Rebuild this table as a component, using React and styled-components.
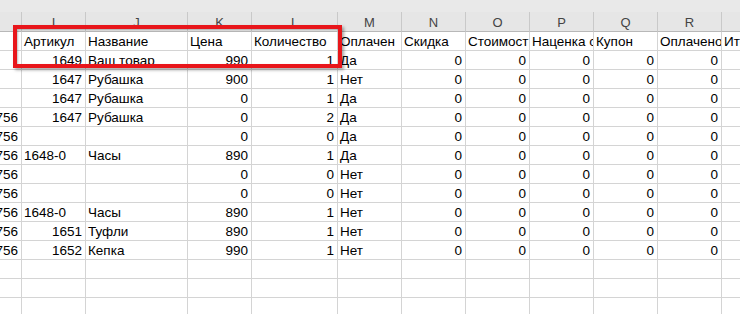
import React from 'react';
import styled, { createGlobalStyle } from 'styled-components';

const columns = [
  { letter: 'H', width: 64 },
  { letter: 'I', width: 64 },
  { letter: 'J', width: 102 },
  { letter: 'K', width: 64 },
  { letter: 'L', width: 86 },
  { letter: 'M', width: 64 },
  { letter: 'N', width: 64 },
  { letter: 'O', width: 64 },
  { letter: 'P', width: 64 },
  { letter: 'Q', width: 64 },
  { letter: 'R', width: 64 },
  { letter: 'S', width: 64 },
];

// the sheet is scrolled so that only the right edge of column H shows
const scrollLeft = 42;

const header = ['', 'Артикул', 'Название', 'Цена', 'Количество', 'Оплачен', 'Скидка', 'Стоимост', 'Наценка с', 'Купон', 'Оплачено', 'Итого'];

const zeros = [0, 0, 0, 0, 0];

const data = [
  ['', 1649, 'Ваш товар', 990, 1, 'Да', ...zeros],
  ['', 1647, 'Рубашка', 900, 1, 'Нет', ...zeros],
  ['', 1647, 'Рубашка', 0, 1, 'Да', ...zeros],
  [756, 1647, 'Рубашка', 0, 2, 'Да', ...zeros],
  [756, '', '', 0, 0, 'Да', ...zeros],
  [756, '1648-0', 'Часы', 890, 1, 'Да', ...zeros],
  [756, '', '', 0, 0, 'Нет', ...zeros],
  [756, '', '', 0, 0, 'Нет', ...zeros],
  [756, '1648-0', 'Часы', 890, 1, 'Нет', ...zeros],
  [756, 1651, 'Туфли', 890, 1, 'Нет', ...zeros],
  [756, 1652, 'Кепка', 990, 1, 'Нет', ...zeros],
  [],
  [],
  [],
];

// every row gets a value for each column, blanks where the sheet is empty
const rows = data.map(r => columns.map((_, i) => r[i] ?? ''));

const template = columns.map(c => `${c.width}px`).join(' ');

function App() {
  return <>
    <GlobalStyle />
    <Sheet>
      <TopStrip />
      <Grid $scroll={scrollLeft}>
        {columns.map(c => <ColHead key={c.letter}>{c.letter}</ColHead>)}
        {header.map((h, i) => <Cell key={'h' + i}>{h}</Cell>)}
        {rows.map((row, r) => row.map((v, i) => (
          <Cell key={r + '-' + i} $num={typeof v === 'number'}>{v}</Cell>
        )))}
      </Grid>
      <Highlight />
    </Sheet>
  </>;
}

export default App;

const GlobalStyle = createGlobalStyle`
  html, body {
    margin: 0;
    padding: 0;
    background: #fff;
    overflow: hidden;
  }
`

const Sheet = styled.div`
  position: relative;
  width: 740px;
  height: 314px;
  overflow: hidden;
  font-family: "Liberation Sans", Arial, sans-serif;
  font-size: 13.5px;
  color: #000;
`

const TopStrip = styled.div`
  height: 12px;
  background: #e9e9e9;
`

const Grid = styled.div`
  display: grid;
  grid-template-columns: ${template};
  grid-template-rows: 20px;
  grid-auto-rows: 19px;
  margin-left: ${props => -props.$scroll}px;
`

const ColHead = styled.div`
  background: #e6e6e6;
  border-right: 1px solid #c9c9c9;
  border-bottom: 1px solid #b8b8b8;
  box-sizing: border-box;
  display: flex;
  align-items: center;
  justify-content: center;
  padding-top: 1px;
  color: #444;
  font-size: 13px;
`

const Cell = styled.div`
  box-sizing: border-box;
  border-right: 1px solid #d4d4d4;
  border-bottom: 1px solid #d4d4d4;
  padding: 0 3px 0 2px;
  overflow: hidden;
  white-space: nowrap;
  line-height: 19px;
  text-align: ${props => props.$num ? 'right' : 'left'};
`

const Highlight = styled.div`
  position: absolute;
  left: 13px;
  top: 25px;
  width: 329px;
  height: 43px;
  box-sizing: border-box;
  border: 4px solid #e8161b;
  box-shadow: 2px 2px 3px rgba(0, 0, 0, 0.35), inset 1px 1px 2px rgba(0, 0, 0, 0.25);
`
